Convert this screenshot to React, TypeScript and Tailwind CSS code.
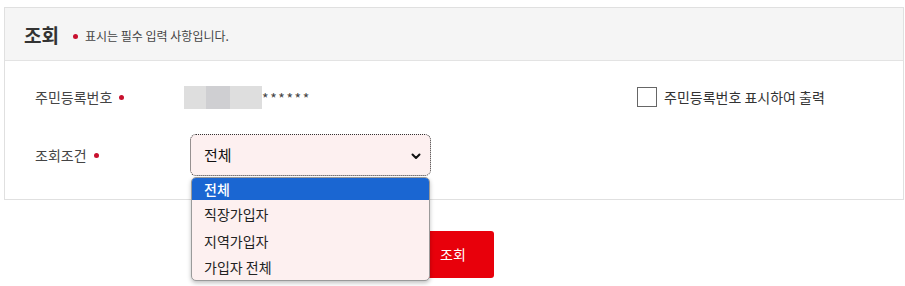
import React from "react";

const font = { fontFamily: '"Noto Sans CJK KR", "Noto Sans", sans-serif' };

function Dot({ className = "" }: { className?: string }) {
  return <span className={`inline-block w-[5px] h-[5px] rounded-full bg-[#c8102e] ${className}`} />;
}

export default function App() {
  return (
    <div className="w-[905px] h-[286px] bg-white overflow-hidden text-[#333]" style={font}>
      <div className="ml-[4px] mt-[7px] w-[900px] border border-[#e0e0e0]">
        <div className="h-[53px] bg-[#f5f5f5] border-b border-[#e3e3e3] flex items-center pl-[19px]">
          <span className="text-[19px] font-bold text-[#333] leading-none">조회</span>
          <Dot className="ml-[14px] mt-[4px]" />
          <span className="ml-[7px] mt-[4px] text-[12px] text-[#444]">표시는 필수 입력 사항입니다.</span>
        </div>
        <div className="pl-[30px] pt-[15px] pb-[23px] flex flex-col gap-[16px]">
          <div className="h-[42px] flex items-center">
            <div className="w-[155px] flex items-center text-[14px] text-[#444]">
              주민등록번호<Dot className="ml-[7px]" />
            </div>
            <div className="w-[447px] flex items-center">
              <div className="-ml-[6px] flex h-[23px]">
                <div className="w-[22px] bg-[#dedede]" />
                <div className="w-[24px] bg-[#cfcfd2]" />
                <div className="w-[32px] bg-[#dedede]" />
              </div>
              <span className="text-[14px] text-[#444] tracking-[1.6px] leading-none mt-[1px]">******</span>
            </div>
            <label className="flex items-center">
              <span className="w-[20px] h-[20px] border border-[#666] bg-white" />
              <span className="ml-[7px] text-[14px] text-[#333]">주민등록번호 표시하여 출력</span>
            </label>
          </div>
          <div className="h-[42px] flex items-center">
            <div className="w-[155px] flex items-center text-[14px] text-[#444]">
              조회조건<Dot className="ml-[7px]" />
            </div>
            <div className="relative w-[241px] h-[42px]">
              <div className="w-full h-full rounded-[6px] border border-dotted border-[#333] bg-[#fdf0f0] flex items-center justify-between pl-[13px] pr-[8px]">
                <span className="text-[15px] text-[#111]">전체</span>
                <svg width="12" height="12" viewBox="0 0 12 12" className="mt-[1px]">
                  <path d="M2.5 4.5 L6 8 L9.5 4.5" fill="none" stroke="#111" strokeWidth="2" strokeLinecap="round" strokeLinejoin="round" />
                </svg>
              </div>
              <div className="absolute z-10 left-[1px] top-[43px] w-[239px] bg-[#fdf0f0] rounded-[5px] border border-[#9a9a9a] shadow-[0_2px_4px_rgba(0,0,0,0.25)] overflow-hidden">
                <div className="h-[22px] bg-[#1a66d2] text-white font-medium text-[14px] pl-[12px] flex items-center">전체</div>
                <div className="h-[27px] text-[14px] text-[#222] pl-[12px] flex items-center mt-[1px]">직장가입자</div>
                <div className="h-[26px] text-[14px] text-[#222] pl-[12px] flex items-center">지역가입자</div>
                <div className="h-[26px] text-[14px] text-[#222] pl-[12px] flex items-center">가입자 전체</div>
              </div>
            </div>
          </div>
        </div>
      </div>
      <div className="flex justify-center mt-[31px]">
        <button className="w-[82px] h-[47px] rounded-[3px] bg-[#e8000b] text-white text-[14px] ml-[1px]">조회</button>
      </div>
    </div>
  );
}
